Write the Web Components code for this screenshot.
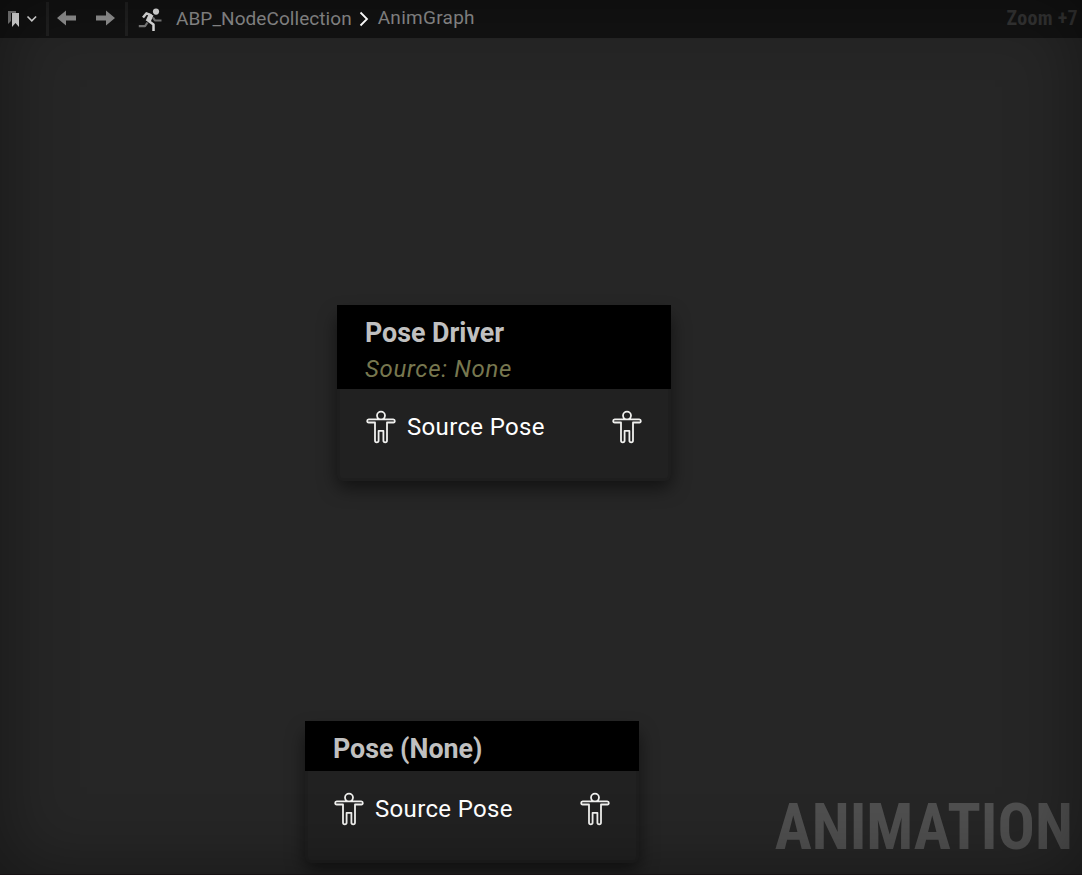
<!DOCTYPE html>
<html lang="en"><head><meta charset="utf-8"><title>AnimGraph</title>
<style>html,body{margin:0;height:100%;overflow:hidden;background:#262626;font-family:Roboto,"Liberation Sans",sans-serif}</style></head>
<body>
<graph-editor></graph-editor>
<script>
const define=(name,html)=>customElements.define(name,class extends HTMLElement{
  constructor(){super();const t=document.createElement('template');t.innerHTML=html;
    this.attachShadow({mode:'open'}).append(t.content.cloneNode(true));}
});
define('pose-pin',`<style>:host{display:block;width:30px;height:34px}svg{display:block}</style>
<svg width="30" height="34" viewBox="0 0 30 34" fill="none" stroke="#f0f0ee" stroke-width="1.8" stroke-linejoin="round"><path d="M13.400 9.400C12 8.600 11 7.400 11 5.700A4 4 0 0 1 19 5.700C19 7.400 18 8.600 16.600 9.400M2.700 9.400H27.300Q28.800 9.400 28.800 11T27.300 12.500H21V30.500Q21 32.300 19.200 32.300T17.400 30.500V20.800H12.600V30.500Q12.600 32.300 10.800 32.300T9 30.500V12.500H2.700Q1.200 12.500 1.200 11T2.700 9.400Z"/></svg>`);
define('graph-node',`<style>
:host{display:block;width:334px;color:#fff;font-size:24px}
.box{position:relative}
.shade{position:absolute;inset:8px 2px 0;border-radius:6px;box-shadow:0 5px 18px 2px #0008}
header{position:relative;background:#000;padding:12px 28px 6px;box-sizing:border-box}
h2{margin:0;font-size:28px;line-height:32px;font-weight:700;color:#c0c0c0;white-space:nowrap}
h2 span{display:inline-block;transform-origin:left;transform:scaleX(.957)}
main{position:relative;height:92px;box-sizing:border-box;padding:21px 26px 0;display:flex;align-items:flex-start;background:#212121;border:solid #1e1e1e;border-width:0 3px 3px;border-radius:0 0 6px 6px}
.label{margin-left:11px;line-height:34px;letter-spacing:.34px;flex:1;white-space:nowrap}
::slotted([slot=subtitle]){display:block;font-size:24px;line-height:28px;margin-top:6px;font-style:italic;color:#77774f;letter-spacing:.68px}
</style><div class="box"><div class="shade"></div><header><h2><span><slot name="title"></slot></span></h2><slot name="subtitle"></slot></header>
<main><pose-pin></pose-pin><span class="label"><slot></slot></span><pose-pin></pose-pin></main></div>`);
define('graph-toolbar',`<style>
:host{display:flex;height:38px;background:#131313;color:#8f8f8f;font-size:19px;box-sizing:border-box;padding-right:4px}
svg{display:block;flex:none}.a,.b{line-height:22px;white-space:nowrap}.a{margin:8px 0 0 4px;letter-spacing:.06px}.b{margin:7px 0 0 4px;letter-spacing:.28px}
.z{margin:6px 0 0 auto;line-height:24px;font-size:20px;font-weight:700;font-stretch:75%;color:#353535;letter-spacing:.3px}
.chevron{position:relative;z-index:2}
</style><svg width="172" height="38" viewBox="0 0 172 38"><path fill="#858585" d="M8 11h8v2h-5v8l-3 3z"/><path fill="#f0f0f0" d="M12 13h7v14l-3.500-4-3.500 4z"/><path d="m27.500 16.500 4.300 4.300 4.300-4.300" fill="none" stroke="#eee" stroke-width="1.600"/><path fill="#212121" d="M46 2h3v34h-3zM125 2h3v34h-3z"/><path fill="#959595" d="m57 18 9-7.500v5h10v5H66v5zM115 18l-9-7.500v5H96v5h10v5z"/>
<g fill="none" stroke="#e8e8e8" stroke-width="2.500" stroke-linejoin="round"><path d="m153 17.500 2 3h6.500M147.500 22.500l-2.500 3.700h-6.200" stroke="#808080" stroke-width="2.200"/><circle cx="156" cy="11.600" r="3.100" fill="#e8e8e8" stroke="none"/><path d="m143 17.500 3.500-4.200 5 2M148 20.500l5.500 4v6.500"/><path d="m151.200 14.500-3.200 7" stroke-width="5"/></g></svg>
<span class="a">ABP_NodeCollection</span><svg class="chevron" width="22" height="38" viewBox="0 0 22 38"><path d="m8.500 12.500 6.500 6.500-6.500 6.500" fill="none" stroke="#f8f8f8" stroke-width="1.800"/></svg><span class="b">AnimGraph</span><span class="z">Zoom +7</span>`);
define('graph-editor',`<style>
:host{display:flex;flex-direction:column;position:relative;width:1082px;height:875px;background:#262626}
.canvas{flex:1;position:relative;overflow:hidden}
graph-node{position:absolute}.one{left:337px;top:267px}.two{left:305px;top:683px}
.vignette{position:absolute;inset:0;pointer-events:none;box-shadow:inset 0 0 72px #0006;border-bottom:1px solid #171214}
.watermark{position:absolute;right:9px;bottom:9px;font-size:65px;line-height:78px;font-weight:700;font-stretch:75%;color:#4f4f4f;transform-origin:right;transform:scaleX(.953)}
</style><graph-toolbar></graph-toolbar><div class="canvas">
<div class="watermark">ANIMATION</div>
<graph-node class="one"><span slot="title">Pose Driver</span><span slot="subtitle">Source: None</span>Source Pose</graph-node>
<graph-node class="two"><span slot="title">Pose (None)</span>Source Pose</graph-node>
</div><div class="vignette"></div>`);
</script></body></html>
